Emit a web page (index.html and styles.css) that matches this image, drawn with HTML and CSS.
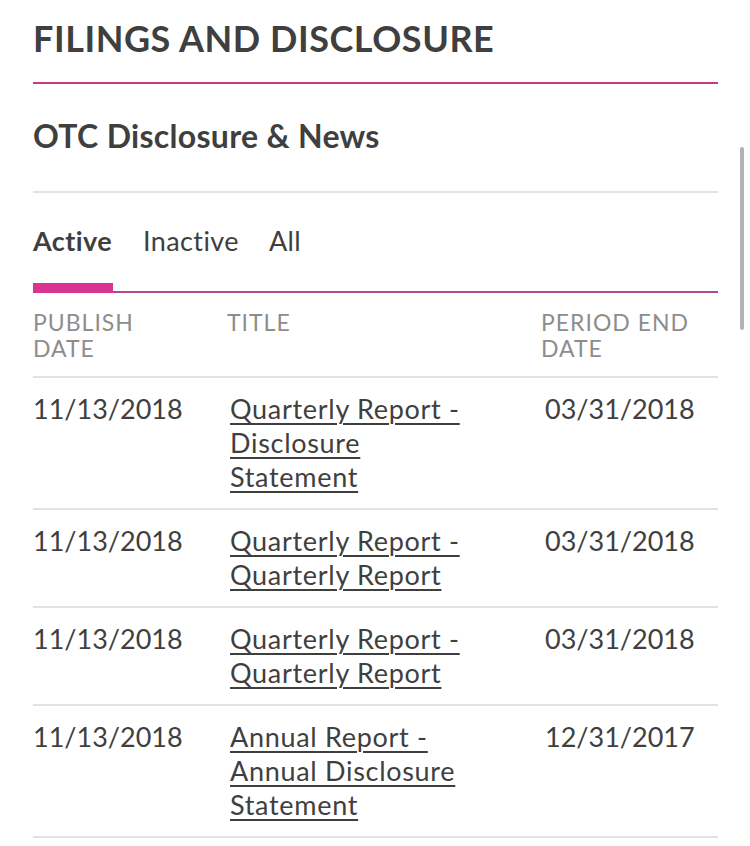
FILE: index.html
```html
<!DOCTYPE html>
<html lang="en">
<head>
<meta charset="utf-8">
<title>Filings and Disclosure</title>
<link rel="stylesheet" href="styles.css">
</head>
<body>
<main class="page">
  <h1 class="page-title">FILINGS AND DISCLOSURE</h1>
  <section class="panel">
    <h2 class="panel-title">OTC Disclosure &amp; News</h2>
    <nav class="tabs">
      <span class="tab tab-active">Active</span>
      <span class="tab">Inactive</span>
      <span class="tab">All</span>
    </nav>
    <table class="filings">
      <thead>
        <tr>
          <th class="col-date">PUBLISH<br>DATE</th>
          <th class="col-title">TITLE</th>
          <th class="col-period">PERIOD END<br>DATE</th>
        </tr>
      </thead>
      <tbody>
        <tr>
          <td class="col-date">11/13/2018</td>
          <td class="col-title"><a href="#">Quarterly Report -<br>Disclosure<br>Statement</a></td>
          <td class="col-period">03/31/2018</td>
        </tr>
        <tr>
          <td class="col-date">11/13/2018</td>
          <td class="col-title"><a href="#">Quarterly Report -<br>Quarterly Report</a></td>
          <td class="col-period">03/31/2018</td>
        </tr>
        <tr>
          <td class="col-date">11/13/2018</td>
          <td class="col-title"><a href="#">Quarterly Report -<br>Quarterly Report</a></td>
          <td class="col-period">03/31/2018</td>
        </tr>
        <tr>
          <td class="col-date">11/13/2018</td>
          <td class="col-title"><a href="#">Annual Report -<br>Annual Disclosure<br>Statement</a></td>
          <td class="col-period">12/31/2017</td>
        </tr>
      </tbody>
    </table>
  </section>
</main>
<div class="scroll-indicator"></div>
</body>
</html>
```

FILE: styles.css
```css
* { box-sizing: border-box; }
html, body {
  margin: 0;
  padding: 0;
  background: #ffffff;
}
body {
  font-family: Lato, "Open Sans", sans-serif;
  color: #3d3d3d;
  overflow: hidden;
}
.page {
  padding: 0 32px 0 33px;
}
.page-title {
  margin: 0;
  padding-top: 18px;
  height: 84px;
  font-size: 36px;
  line-height: 40px;
  letter-spacing: 0.55px;
  font-weight: 700;
  color: #3f3f3f;
  border-bottom: 2px solid #c63d87;
}
.panel-title {
  margin: 0;
  height: 109px;
  padding-top: 33px;
  font-size: 32px;
  line-height: 38px;
  letter-spacing: 0.3px;
  font-weight: 700;
  color: #3f3f3f;
  border-bottom: 2px solid #e2e2e2;
}
.tabs {
  display: flex;
  align-items: flex-start;
  gap: 30px;
  height: 100px;
  padding-top: 31px;
  border-bottom: 2px solid #b04a8a;
}
.tab {
  font-size: 27px;
  line-height: 34px;
  letter-spacing: 0.4px;
  color: #3f3f3f;
}
.tab-active {
  font-weight: 700;
  width: 80px;
  height: 69px;
  border-bottom: 10px solid #d83590;
}
.filings {
  width: 100%;
  border-collapse: collapse;
}
.filings th {
  text-align: left;
  font-weight: 400;
  font-size: 23px;
  line-height: 26px;
  letter-spacing: 1px;
  color: #8d8d8d;
  padding: 16px 0 15px;
  vertical-align: top;
  border-bottom: 2px solid #e2e2e2;
}
.filings td {
  font-size: 27px;
  line-height: 34px;
  color: #3f3f3f;
  padding: 14px 0 14px;
  vertical-align: top;
  border-bottom: 2px solid #e2e2e2;
}
.col-date { width: 194px; }
.col-title { width: 314px; }
td.col-title { padding-left: 3px; }
td.col-period { padding-left: 4px; }
.filings a {
  color: #3f3f3f;
  letter-spacing: 0.7px;
  text-decoration: underline;
  text-underline-offset: 4px;
  text-decoration-thickness: 2px;
}
.scroll-indicator {
  position: absolute;
  left: 740px;
  top: 147px;
  width: 4px;
  height: 183px;
  border-radius: 2px;
  background: #b3b3b3;
}
```
